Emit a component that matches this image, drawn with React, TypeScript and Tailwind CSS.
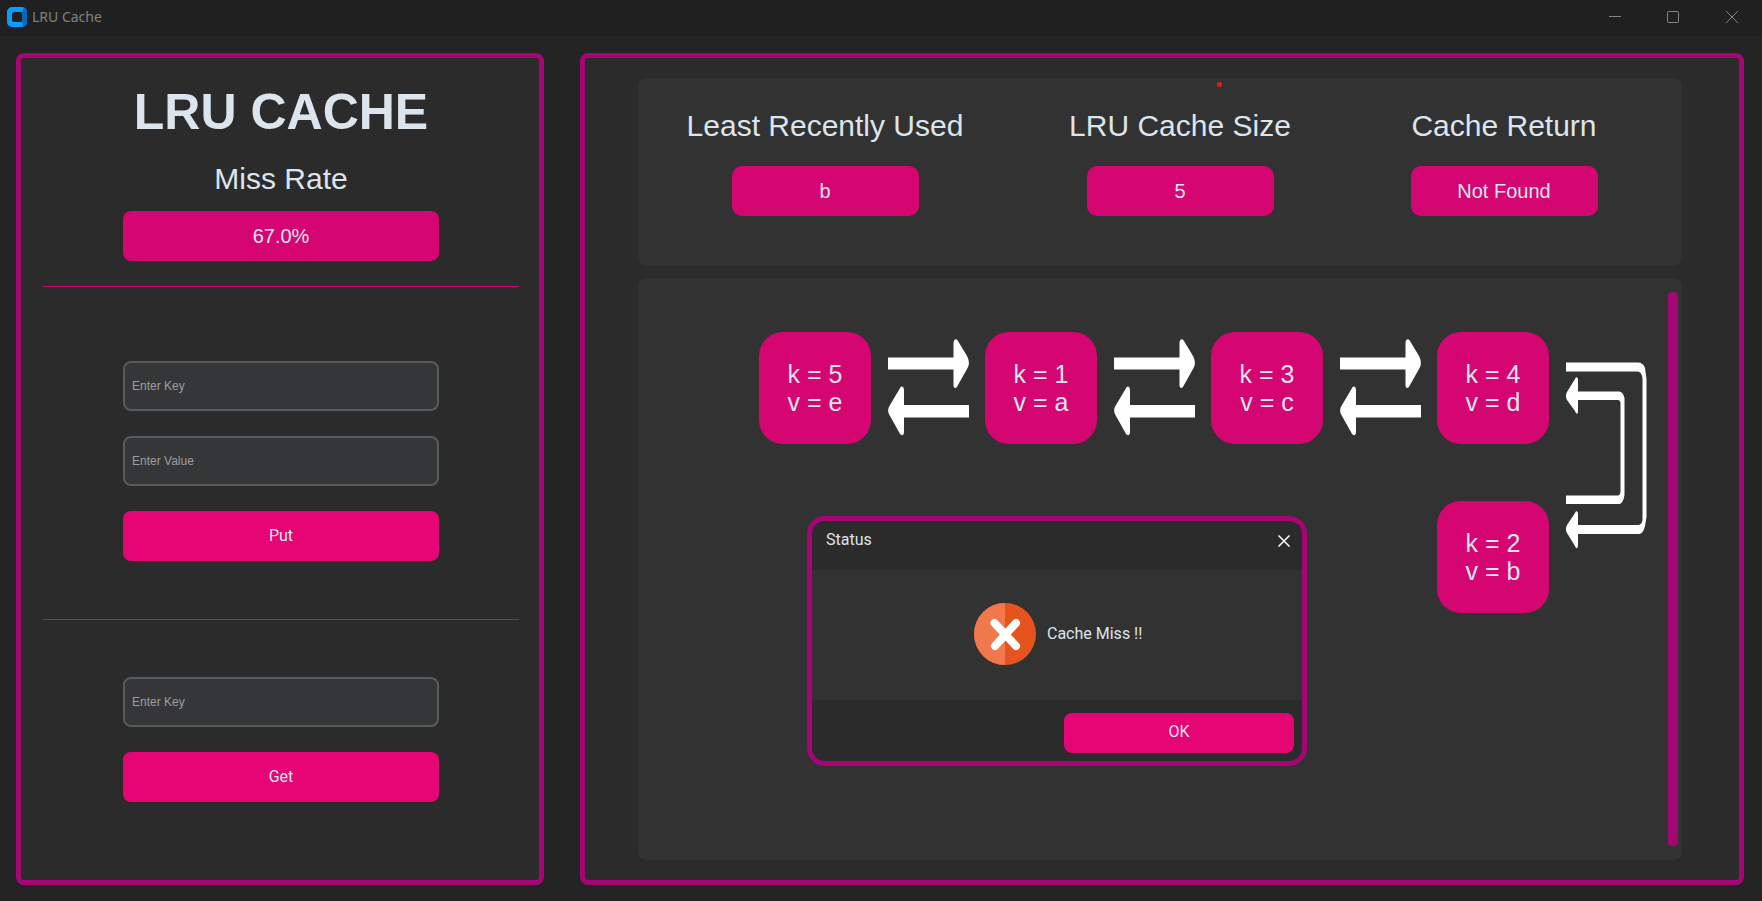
const FONT = "font-['Liberation_Sans',Arial,sans-serif]";
const FONT_UI = "font-['Roboto',sans-serif]";

type CacheNode = { k: string; v: string };

const firstRow: CacheNode[] = [
  { k: '5', v: 'e' },
  { k: '1', v: 'a' },
  { k: '3', v: 'c' },
  { k: '4', v: 'd' },
];
const lastNode: CacheNode = { k: '2', v: 'b' };

function TitleBar() {
  return (
    <header className="flex h-9 shrink-0 items-center justify-between bg-[#202020] pb-0.5 pl-[7px] text-[#808080]">
      <div className="flex items-center gap-[5px]">
        <svg width="20" height="20" viewBox="0 0 20 20" aria-hidden="true">
          <rect width="20" height="20" rx="5" fill="#0a9bff" />
          <path d="M15 0.5 A5 5 0 0 1 20 5 V15 A5 5 0 0 1 15 20 C17 18.500 16 17 14.500 15.500 V4.500 C17 3 17 1.500 15 0.500Z" fill="#0768bb" />
          <rect x="5" y="5" width="10" height="10" rx="2" fill="#202020" />
        </svg>
        <h1 className="font-['Noto_Sans',sans-serif] text-sm leading-5">LRU Cache</h1>
      </div>
      <div className="flex h-full">
        <button type="button" aria-label="Minimize" className="flex w-[58px] items-center justify-center">
          <svg width="12" height="12" viewBox="0 0 12 12"><path d="M0 5.500H12" stroke="#858585" /></svg>
        </button>
        <button type="button" aria-label="Maximize" className="flex w-[58px] items-center justify-center">
          <svg width="12" height="12" viewBox="0 0 12 12"><rect x="0.500" y="0.500" width="11" height="11" rx="1" fill="none" stroke="#858585" /></svg>
        </button>
        <button type="button" aria-label="Close window" className="flex w-[60px] items-center justify-center">
          <svg width="12" height="12" viewBox="0 0 12 12"><path d="M0 0L12 12M12 0L0 12" stroke="#858585" /></svg>
        </button>
      </div>
    </header>
  );
}

function Field({ label }: { label: string }) {
  return (
    <input
      type="text"
      aria-label={label}
      placeholder={label}
      className={`h-[50px] w-full rounded-lg border-2 border-[#565b5e] bg-[#343638] px-[7px] text-xs text-[#dce4ee] outline-none placeholder:text-[#9e9e9e] ${FONT}`}
    />
  );
}

function ActionButton({ label }: { label: string }) {
  return (
    <button type="button" className={`h-[50px] w-full rounded-lg bg-[#e50574] text-base text-[#dce4ee] ${FONT_UI}`}>
      {label}
    </button>
  );
}

function ControlPanel() {
  return (
    <section className="w-[528px] shrink-0 rounded-lg border-[5px] border-[#a40673] bg-[#2b2b2b] pr-5 pl-[22px]">
      <h2 className="mt-[25px] text-center text-[50px] leading-[58px] font-bold">LRU CACHE</h2>
      <h3 className="mt-[20px] text-center text-[30px] leading-9">Miss Rate</h3>
      <output className="mx-auto mt-3.5 flex h-[50px] w-[316px] items-center justify-center rounded-lg bg-[#d50572] text-xl">67.0%</output>
      <hr className="mt-[25px] border-0 border-t border-[#d50572]" />
      <form className="mx-auto mt-[74px] flex w-[316px] flex-col gap-[25px]" onSubmit={(e) => e.preventDefault()}>
        <Field label="Enter Key" />
        <Field label="Enter Value" />
        <ActionButton label="Put" />
      </form>
      <hr className="mt-[58px] border-0 border-t border-[#d50572]" />
      <form className="mx-auto mt-[57px] flex w-[316px] flex-col gap-[25px]" onSubmit={(e) => e.preventDefault()}>
        <Field label="Enter Key" />
        <ActionButton label="Get" />
      </form>
    </section>
  );
}

function Stat({ label, value }: { label: string; value: string }) {
  return (
    <div className="flex flex-col items-center gap-[22px]">
      <h3 className="text-[30px] leading-9 whitespace-nowrap">{label}</h3>
      <output className="flex h-[50px] w-[187px] items-center justify-center rounded-[10px] bg-[#d50572] text-xl">{value}</output>
    </div>
  );
}

function NodeBox({ node }: { node: CacheNode }) {
  return (
    <div className="flex size-28 shrink-0 flex-col items-center justify-center rounded-3xl bg-[#d50572] text-[25px] leading-7">
      <span>k = {node.k}</span>
      <span>v = {node.v}</span>
    </div>
  );
}

function LinkArrows() {
  return (
    <svg className="mr-4 ml-[17px] shrink-0" width="81" height="98" viewBox="0 0 81 98" fill="#fff" aria-hidden="true">
      <path d="M0 18.500H65.500V4C65.500 0 68.500 -1 70 2L79 17C81.500 22 81.500 26 79 30L70 46C68.500 50 65.500 50 65.500 46V30.500H0Z" />
      <path d="M81 66H16V51C16 47 13 46 11.500 50L2 66C-0.500 70 -0.500 73 2 77L11.500 94C13 97 16 97 16 93V78.500H81Z" />
    </svg>
  );
}

function WrapArrows() {
  return (
    <svg className="mt-[30px] ml-[17px] shrink-0" width="81" height="187" viewBox="0 0 81 187" fill="#fff" aria-hidden="true">
      <path d="M0 0.500H72Q77 0.500 79 6L80.500 17V155L79 164Q77 172 73 172H12V183C12 187 10 187 9 184L1 171C-0.500 168 -0.500 167 1 163L9 151C10 148 12 149 12 152V163H73Q76 162 76.500 158V17Q76 10 72 9.500H0Z" />
      <path d="M12 29.500H53Q57 29.500 58.500 36V133Q57 141 54 142H0V133.500H52Q54.500 133 54.500 129V41Q54 38 52 38H12V49C12 53 10 52 9 49L1 38C-0.500 35 -0.500 33 1 30L9 17C10 14 12 15 12 18Z" />
    </svg>
  );
}

function StatusDialog() {
  return (
    <div
      role="dialog"
      aria-labelledby="status-title"
      className={`absolute top-[238px] left-[169px] flex h-[250px] w-[500px] flex-col overflow-hidden rounded-[18px] border-[5px] border-[#a40673] bg-[#2b2b2b] text-base ${FONT_UI}`}
    >
      <div className="flex h-[49px] shrink-0 items-start justify-between pt-[9px] pr-3 pl-3.5">
        <h2 id="status-title" className="leading-5">Status</h2>
        <button type="button" aria-label="Close" className="pt-[5px]">
          <svg width="12" height="12" viewBox="0 0 12 12"><path d="M0.500 0.500L11.500 11.500M11.500 0.500L0.500 11.500" stroke="#fff" strokeWidth="1.500" /></svg>
        </button>
      </div>
      <div className="flex grow items-center bg-[#323232] pb-0.5 pl-[162px]">
        <svg width="62" height="62" viewBox="0 0 62 62" aria-hidden="true">
          <circle cx="31" cy="31" r="31" fill="#e5531e" />
          <path d="M31 0A31 31 0 0 0 31 62Z" fill="#f0784c" />
          <path d="M20.500 20L42 43M42 20L21 43" stroke="#fff" strokeWidth="8" strokeLinecap="round" />
        </svg>
        <p className="ml-[11px] leading-5">Cache Miss !!</p>
      </div>
      <div className="flex h-[61px] shrink-0 items-start justify-end pt-[13px] pr-2">
        <button type="button" className="h-10 w-[230px] rounded-lg bg-[#e50574] pb-0.5">OK</button>
      </div>
    </div>
  );
}

function CacheView() {
  return (
    <section className="flex grow flex-col gap-3 rounded-lg border-[5px] border-[#a40673] bg-[#2b2b2b] pt-5 pr-[57px] pb-5 pl-[53px]">
      <div className="relative grid h-[188px] shrink-0 grid-cols-[374fr_336fr_312fr] rounded-lg bg-[#323232] pt-[30px] pr-[22px]">
        <i className="absolute top-1 left-[579px] size-[5px] rounded-full bg-[#e8191c]" />
        <Stat label="Least Recently Used" value="b" />
        <Stat label="LRU Cache Size" value="5" />
        <Stat label="Cache Return" value="Not Found" />
      </div>
      <div className="relative flex grow rounded-lg bg-[#323232] pt-3.5 pr-1 pb-3.5">
        <div className="grow pt-10 pl-[121px]">
          <div className="flex h-[169px] items-start">
            {firstRow.map((node, i) => (
              <div key={node.k} className="flex items-start">
                {i > 0 && <div className="pt-[7px]"><LinkArrows /></div>}
                <NodeBox node={node} />
              </div>
            ))}
            <WrapArrows />
          </div>
          <div className="pl-[678px]">
            <NodeBox node={lastNode} />
          </div>
        </div>
        <div className="w-2.5 rounded-[4px] bg-[#a40673]" />
        <StatusDialog />
      </div>
    </section>
  );
}

export default function App() {
  return (
    <div className={`flex min-h-screen flex-col bg-[#242424] text-[#dce4ee] ${FONT}`}>
      <TitleBar />
      <main className="flex grow gap-9 pt-[17px] pr-[18px] pb-4 pl-4">
        <ControlPanel />
        <CacheView />
      </main>
    </div>
  );
}
